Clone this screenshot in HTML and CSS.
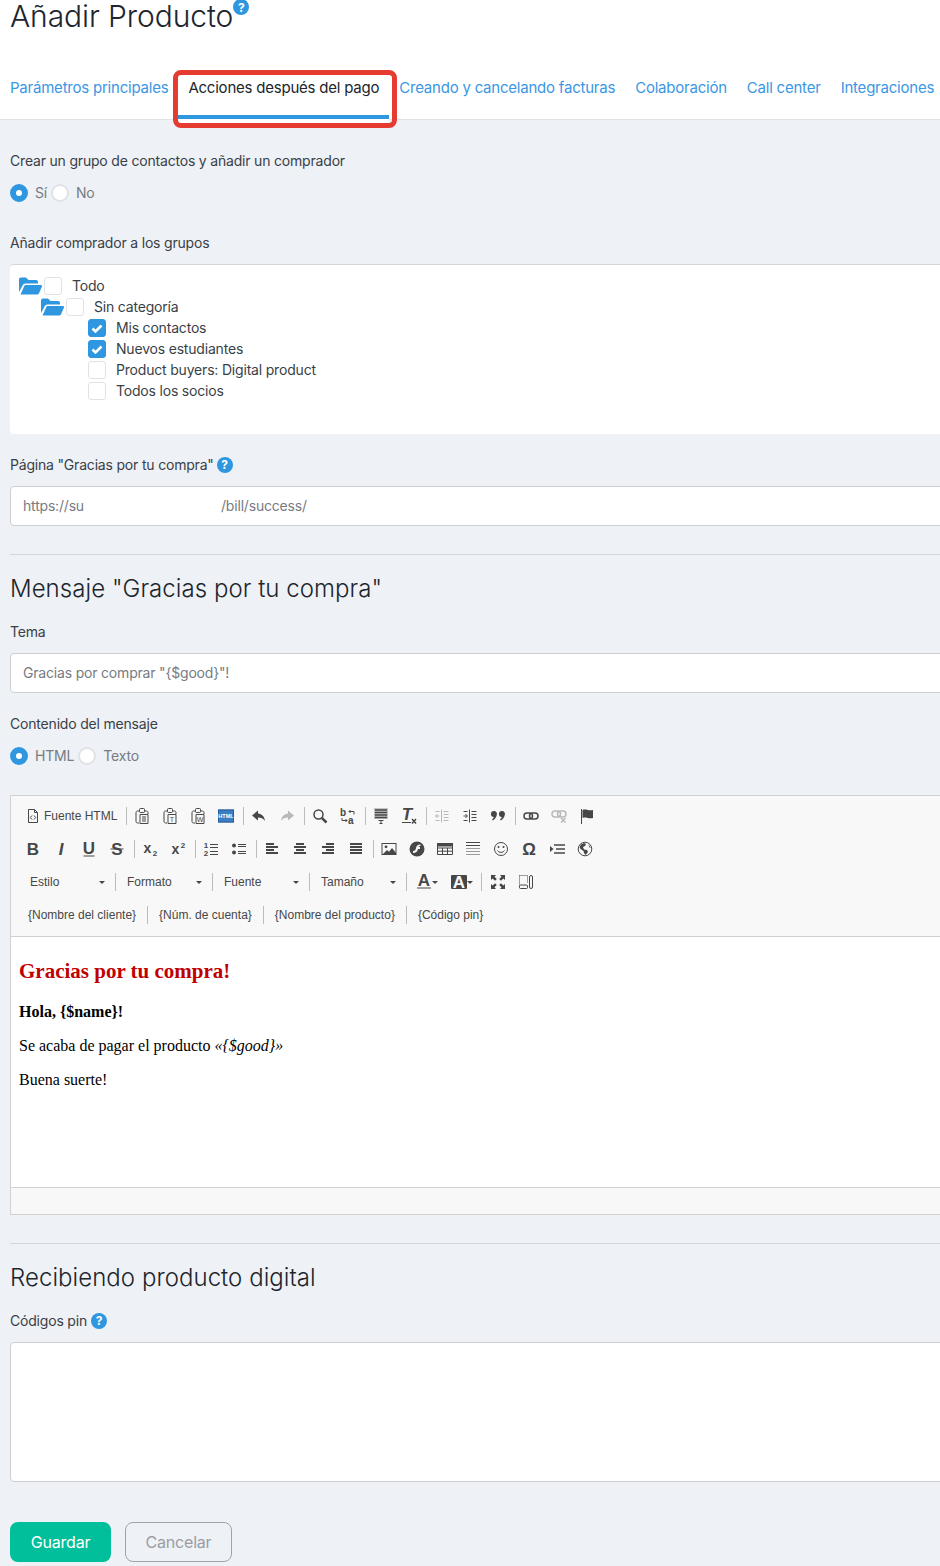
FILE: index.html
```html
<!DOCTYPE html>
<html lang="es">
<head>
    <meta charset="UTF-8"/>
    <meta name="viewport" content="width=device-width, initial-scale=1.0"/>
    <title>Añadir Producto</title>
    <link rel="stylesheet" href="styles.css">
</head>
<body>
<div class="page">
    <header class="top">
        <div class="title-row">
            <h1>Añadir Producto</h1>
            <span class="help help-title">?</span>
        </div>
        <nav class="tabs">
            <a class="tab">Parámetros principales</a>
            <a class="tab active">Acciones después del pago</a>
            <a class="tab">Creando y cancelando facturas</a>
            <a class="tab">Colaboración</a>
            <a class="tab">Call center</a>
            <a class="tab">Integraciones</a>
        </nav>
    </header>

    <main class="content">
        <label class="field-label first">Crear un grupo de contactos y añadir un comprador</label>
        <div class="radios">
            <span class="radio on"></span><span class="radio-text">Sí</span>
            <span class="radio"></span><span class="radio-text">No</span>
        </div>

        <label class="field-label groups">Añadir comprador a los grupos</label>
        <div class="tree">
            <div class="tree-row">
                <svg class="folder" viewBox="0 0 23 18"><path d="M0 15V2.500C0 1.400 0.900 0.500 2 0.500h5l2.500 2.500H17c1.100 0 2 0.900 2 2v1.500H6.500C5.200 6.500 4.200 7.200 3.700 8.300z"/><path d="M1.500 17.500l3.700-8.200c0.300-0.700 1-1.200 1.800-1.200h15c0.800 0 1.300 0.800 1 1.500l-3 6.700c-0.400 0.800-1.200 1.200-2 1.200z"/></svg>
                <span class="check"></span>
                <span class="tree-text">Todo</span>
            </div>
            <div class="tree-row lvl1">
                <svg class="folder" viewBox="0 0 23 18"><path d="M0 15V2.500C0 1.400 0.900 0.500 2 0.500h5l2.500 2.500H17c1.100 0 2 0.900 2 2v1.500H6.500C5.200 6.500 4.200 7.200 3.700 8.300z"/><path d="M1.500 17.500l3.700-8.200c0.300-0.700 1-1.200 1.800-1.200h15c0.800 0 1.300 0.800 1 1.500l-3 6.700c-0.400 0.800-1.200 1.200-2 1.200z"/></svg>
                <span class="check"></span>
                <span class="tree-text">Sin categoría</span>
            </div>
            <div class="tree-row lvl2">
                <span class="check on"><svg viewBox="0 0 16 16"><path d="M3.500 8.500l3 3 6-6"/></svg></span>
                <span class="tree-text">Mis contactos</span>
            </div>
            <div class="tree-row lvl2">
                <span class="check on"><svg viewBox="0 0 16 16"><path d="M3.500 8.500l3 3 6-6"/></svg></span>
                <span class="tree-text">Nuevos estudiantes</span>
            </div>
            <div class="tree-row lvl2">
                <span class="check"></span>
                <span class="tree-text">Product buyers: Digital product</span>
            </div>
            <div class="tree-row lvl2">
                <span class="check"></span>
                <span class="tree-text">Todos los socios</span>
            </div>
        </div>

        <label class="field-label with-help thanks">Página "Gracias por tu compra" <span class="help">?</span></label>
        <div class="input url-input">
            <span class="url-start">https://su</span><span class="url-end">/bill/success/</span>
        </div>

        <hr class="rule">
        <h2>Mensaje "Gracias por tu compra"</h2>

        <label class="field-label tema">Tema</label>
        <input class="input" type="text" value="Gracias por comprar &quot;{$good}&quot;!">

        <label class="field-label body-label">Contenido del mensaje</label>
        <div class="radios">
            <span class="radio on"></span><span class="radio-text">HTML</span>
            <span class="radio"></span><span class="radio-text">Texto</span>
        </div>

        <div class="editor">
            <div class="toolbar">
                <div class="tool-row">
                    <span class="btn btn-source">
                        <svg viewBox="0 0 16 16"><path class="ln" d="M3.500 1.500h6l3 3v10h-9zM9.500 1.500v3h3"/><path class="ln" d="M7 7.500L5.300 9.500 7 11.500M9 7.500l1.700 2L9 11.500"/></svg>
                        Fuente HTML
                    </span>
                    <i class="sep"></i>
                    <span class="btn"><svg viewBox="0 0 16 16"><path class="ln" d="M5 3H3.500C2.700 3 2 3.700 2 4.500v9c0 0.800 0.700 1.500 1.500 1.500H5M11 3h1.500c0.800 0 1.500 0.700 1.500 1.500V6"/><rect class="ln" x="5.500" y="0.500" width="5" height="4" rx="1"/><path class="ln" d="M6 6.500h8v9H6zM8 9h4M8 11h4M8 13h4"/></svg></span>
                    <span class="btn"><svg viewBox="0 0 16 16"><path class="ln" d="M5 3H3.500C2.700 3 2 3.700 2 4.500v9c0 0.800 0.700 1.500 1.500 1.500H5M11 3h1.500c0.800 0 1.500 0.700 1.500 1.500V6"/><rect class="ln" x="5.500" y="0.500" width="5" height="4" rx="1"/><path class="ln" d="M6 6.500h8v9H6z"/><text class="ic-mini" x="10" y="13.500">T</text></svg></span>
                    <span class="btn"><svg viewBox="0 0 16 16"><path class="ln" d="M5 3H3.500C2.700 3 2 3.700 2 4.500v9c0 0.800 0.700 1.500 1.500 1.500H5M11 3h1.500c0.800 0 1.500 0.700 1.500 1.500V6"/><rect class="ln" x="5.500" y="0.500" width="5" height="4" rx="1"/><path class="ln" d="M6 6.500h8v9H6z"/><text class="ic-mini" x="10" y="13.500">W</text></svg></span>
                    <span class="btn"><svg viewBox="0 0 16 16"><rect x="0" y="1.500" width="16" height="13" fill="#3a7fc4"/><rect x="0.500" y="2" width="15" height="12" fill="none" stroke="#2a5f99"/><text class="ic-html" x="8" y="10.200">HTML</text></svg></span>
                    <i class="sep"></i>
                    <span class="btn"><svg viewBox="0 0 16 16"><path d="M7 2.500L1 7.500l6 5V9.500c3 0 5 0.800 7 3.500-0.500-4.500-3-7-7-7.500z"/></svg></span>
                    <span class="btn off"><svg viewBox="0 0 16 16"><path d="M9 2.500l6 5-6 5V9.500c-3 0-5 0.800-7 3.500 0.500-4.500 3-7 7-7.500z"/></svg></span>
                    <i class="sep"></i>
                    <span class="btn"><svg viewBox="0 0 16 16"><circle class="ln ln2" cx="6.500" cy="6.500" r="4.500"/><path class="ln ln3" d="M9.800 9.800l4.700 4.700"/></svg></span>
                    <span class="btn"><svg viewBox="0 0 16 16"><text class="ic-mini ic-side" x="0" y="8">b</text><text class="ic-mini ic-side" x="8" y="15.500">a</text><path class="ln" d="M9 3.500h5v3M10.500 2L9 3.500 10.500 5M2 10v2.500h5M5.500 11L7 12.500 5.500 14"/></svg></span>
                    <i class="sep"></i>
                    <span class="btn"><svg viewBox="0 0 16 16"><rect x="1" y="0" width="14" height="11" fill="#c4c4c4"/><path class="ln ln2" d="M2 2h12M2 4.500h12M2 7h12M2 9.500h12"/><path class="ln" d="M5.500 12.500h5M8 12.500v3M6.500 15.500h3"/></svg></span>
                    <span class="btn"><svg viewBox="0 0 16 16"><text class="ic-letter ic-italic" x="6" y="12">T</text><path class="ln" d="M1 14.500h9"/><path class="ln ln2" d="M11 11l4 4.500M15 11l-4 4.500"/></svg></span>
                    <i class="sep"></i>
                    <span class="btn off"><svg viewBox="0 0 16 16"><path class="ln" d="M7.500 1.500v13M9.500 3.500h5M9.500 6.500h5M9.500 9.500h5M9.500 12.500h5M1.500 3.500h4M1.500 12.500h4M5.500 8H2M3.500 6L1.500 8l2 2"/></svg></span>
                    <span class="btn"><svg viewBox="0 0 16 16"><path class="ln" d="M7.500 1.500v13M9.500 3.500h5M9.500 6.500h5M9.500 9.500h5M9.500 12.500h5M1.500 3.500h4M1.500 12.500h4M1.500 8H5M3.500 6l2 2-2 2"/></svg></span>
                    <span class="btn"><svg viewBox="0 0 16 16"><path d="M4 3a3 3 0 0 1 2.800 4c-0.600 2.500-2 4.300-4 5.500l-0.800-1c1-0.800 1.700-1.700 1.900-2.500A3 3 0 0 1 4 3zM12 3a3 3 0 0 1 2.800 4c-0.600 2.500-2 4.300-4 5.500l-0.800-1c1-0.800 1.700-1.700 1.900-2.500A3 3 0 0 1 12 3z"/></svg></span>
                    <i class="sep"></i>
                    <span class="btn"><svg viewBox="0 0 16 16"><rect class="ln ln2" x="1" y="5" width="8.500" height="6" rx="3"/><rect class="ln ln2" x="6.500" y="5" width="8.500" height="6" rx="3"/></svg></span>
                    <span class="btn off"><svg viewBox="0 0 16 16"><rect class="ln ln2" x="1" y="3" width="8.500" height="6" rx="3"/><rect class="ln ln2" x="6.500" y="3" width="8.500" height="6" rx="3"/><path class="ln ln2" d="M10 10l4.500 4.500M14.500 10L10 14.500"/></svg></span>
                    <span class="btn"><svg viewBox="0 0 16 16"><path class="ln" d="M2.500 1v15"/><path d="M3.500 2c4-1.500 6 1.200 10.500 0v8c-4.500 1.200-6.500-1.500-10.500 0z"/></svg></span>
                </div>

                <div class="tool-row">
                    <span class="btn"><svg viewBox="0 0 16 16"><text class="ic-letter" x="8" y="14">B</text></svg></span>
                    <span class="btn"><svg viewBox="0 0 16 16"><text class="ic-letter ic-italic" x="8" y="14">I</text></svg></span>
                    <span class="btn"><svg viewBox="0 0 16 16"><text class="ic-letter" x="8" y="12.500">U</text><path class="ln" d="M2.500 15h11"/></svg></span>
                    <span class="btn"><svg viewBox="0 0 16 16"><text class="ic-letter" x="8" y="14">S</text><path class="ln" d="M1.500 8h13"/></svg></span>
                    <i class="sep"></i>
                    <span class="btn"><svg viewBox="0 0 16 16"><text class="ic-letter ic-small" x="5.500" y="11.500">x</text><text class="ic-sub" x="13" y="15">2</text></svg></span>
                    <span class="btn"><svg viewBox="0 0 16 16"><text class="ic-letter ic-small" x="5.500" y="13">x</text><text class="ic-sub" x="13" y="7">2</text></svg></span>
                    <i class="sep"></i>
                    <span class="btn"><svg viewBox="0 0 16 16"><text class="ic-sub" x="3" y="7">1</text><text class="ic-sub" x="3" y="14.500">2</text><path class="ln" d="M7 3.500h8M7 6.500h8M7 10.500h8M7 13.500h8"/></svg></span>
                    <span class="btn"><svg viewBox="0 0 16 16"><circle cx="3" cy="4.500" r="2"/><circle cx="3" cy="11.500" r="2"/><path class="ln" d="M7 3.500h8M7 5.500h8M7 10.500h8M7 12.500h8"/></svg></span>
                    <i class="sep"></i>
                    <span class="btn"><svg viewBox="0 0 16 16"><path class="ln ln-bar" d="M2 3h8M2 6h12M2 9h8M2 12h12"/></svg></span>
                    <span class="btn"><svg viewBox="0 0 16 16"><path class="ln ln-bar" d="M4 3h8M2 6h12M4 9h8M2 12h12"/></svg></span>
                    <span class="btn"><svg viewBox="0 0 16 16"><path class="ln ln-bar" d="M6 3h8M2 6h12M6 9h8M2 12h12"/></svg></span>
                    <span class="btn"><svg viewBox="0 0 16 16"><path class="ln ln-bar" d="M2 3h12M2 6h12M2 9h12M2 12h12"/></svg></span>
                    <i class="sep"></i>
                    <span class="btn"><svg viewBox="0 0 16 16"><rect class="ln" x="1" y="2.500" width="14" height="11"/><circle cx="5" cy="5.800" r="1.400"/><path d="M2 13l4-4 2 1.800L11 7l4 5v1.500z"/></svg></span>
                    <span class="btn"><svg viewBox="0 0 16 16"><circle cx="8" cy="8" r="7.500"/><path fill="#f8f8f8" d="M11.500 3.500c-3 0-4 1.500-4.500 3.500-0.400 1.800-1 3-3 3v2c3 0 4.300-1.600 5-4h2V6H9.600c0.300-0.700 0.900-1 1.900-1z"/></svg></span>
                    <span class="btn"><svg viewBox="0 0 16 16"><path class="ln" d="M0.500 2.500h15v11H0.500zM0.500 7h15M0.500 10.200h15M5.500 7v6.500M10.500 7v6.500"/><rect x="0" y="2" width="16" height="3.500"/></svg></span>
                    <span class="btn"><svg viewBox="0 0 16 16"><path class="ln" d="M1 1.500h14M1 4.500h14"/><path class="ln-grey" d="M1 7.500h14M1 10.500h14M1 13.500h14"/></svg></span>
                    <span class="btn"><svg viewBox="0 0 16 16"><circle class="ln" cx="8" cy="8" r="6.500"/><circle cx="5.500" cy="6" r="1"/><circle cx="10.500" cy="6" r="1"/><path class="ln" d="M4.500 9.500c1.500 2.500 5.500 2.500 7 0"/></svg></span>
                    <span class="btn"><svg viewBox="0 0 16 16"><text class="ic-letter ic-omega" x="8" y="14">Ω</text></svg></span>
                    <span class="btn"><svg viewBox="0 0 16 16"><path d="M1 5l3.500 3L1 11z"/><path class="ln ln2" d="M5 4h11M7 8h9M5 12h11"/></svg></span>
                    <span class="btn"><svg viewBox="0 0 16 16"><circle class="ln" cx="8" cy="8" r="6.800"/><path d="M4 3.500l3-1.500 2 1-1 2-2 1 1 2.500 3 0.500 1 2-2.500 3-1.500-2-0.500-2-3-2-1-2zM11.500 3.500l2.500 3-1.500 0z"/></svg></span>
                </div>

                <div class="tool-row tool-row-c">
                    <span class="combo">Estilo<b class="caret"></b></span>
                    <i class="sep"></i>
                    <span class="combo">Formato<b class="caret"></b></span>
                    <i class="sep"></i>
                    <span class="combo">Fuente<b class="caret"></b></span>
                    <i class="sep"></i>
                    <span class="combo">Tamaño<b class="caret"></b></span>
                    <i class="sep"></i>
                    <span class="color-btn color-first">
                        <svg viewBox="0 0 16 16"><text class="ic-letter" x="8" y="11.500">A</text><rect x="1" y="13" width="14" height="2" fill="#a0a0a0"/></svg>
                        <b class="caret"></b>
                    </span>
                    <span class="color-btn">
                        <svg viewBox="0 0 16 16"><rect x="0" y="1" width="16" height="14" rx="1"/><text class="ic-letter ic-inv" x="8" y="13.500">A</text></svg>
                        <b class="caret"></b>
                    </span>
                    <i class="sep"></i>
                    <span class="btn"><svg viewBox="0 0 16 16"><path d="M1 1h5L4.500 2.700 6.800 5 5 6.800 2.700 4.500 1 6zM15 1v5l-1.700-1.500L11 6.800 9.200 5l2.300-2.300L10 1zM1 15v-5l1.700 1.500L5 9.200 6.800 11l-2.300 2.300L6 15zM15 15h-5l1.500-1.700L9.200 11l1.800-1.800 2.300 2.300L15 10z"/></svg></span>
                    <span class="btn"><svg viewBox="0 0 16 16"><path class="ln ln-dot" d="M1.500 1.500h8v8M1.500 1.500v9"/><rect class="ln" x="1.500" y="11" width="8" height="3.500" rx="1"/><rect class="ln" x="11.500" y="1.500" width="3" height="13" rx="1.500"/></svg></span>
                </div>

                <div class="tool-row tool-row-d">
                    <span class="tpl">{Nombre del cliente}</span>
                    <i class="sep"></i>
                    <span class="tpl">{Núm. de cuenta}</span>
                    <i class="sep"></i>
                    <span class="tpl">{Nombre del producto}</span>
                    <i class="sep"></i>
                    <span class="tpl">{Código pin}</span>
                </div>
            </div>

            <div class="editor-body">
                <h3>Gracias por tu compra!</h3>
                <p><strong>Hola, {$name}!</strong></p>
                <p>Se acaba de pagar el producto <em>«{$good}»</em></p>
                <p>Buena suerte!</p>
            </div>
            <div class="editor-foot"></div>
        </div>

        <hr class="rule">
        <h2>Recibiendo producto digital</h2>

        <label class="field-label with-help pins">Códigos pin <span class="help">?</span></label>
        <textarea class="pin-area"></textarea>

        <div class="actions">
            <button class="btn-save" type="button">Guardar</button>
            <button class="btn-cancel" type="button">Cancelar</button>
        </div>
    </main>
</div>
</body>
</html>
```

FILE: styles.css
```css
html, body {
    margin: 0;
    overflow-x: hidden;
}

body {
    font-family: Inter, "Liberation Sans", sans-serif;
    background: #eef1f6;
    color: #3a3f47;
    font-size: 14px;
    letter-spacing: -0.19px;
}

.page {
    width: 940px;
    height: 1566px;
    overflow: hidden;
}

/* header */
.top {
    background: #fff;
    height: 119px;
    border-bottom: 1px solid #dfe2e7;
}

.title-row {
    display: flex;
    align-items: flex-start;
    height: 70px;
    padding-left: 10px;
}

h1 {
    margin: 0;
    font-size: 30px;
    font-weight: 300;
    line-height: 32px;
    letter-spacing: -0.08px;
    color: #20252c;
}

.help {
    display: inline-flex;
    align-items: center;
    justify-content: center;
    width: 16px;
    height: 16px;
    border-radius: 50%;
    background: #2f96e0;
    color: #fff;
    font-size: 12px;
    font-weight: 700;
    letter-spacing: 0;
}

.help-title {
    margin-top: -1px;
}

.tabs {
    display: flex;
    height: 49px;
}

.tab {
    padding: 8px 10px 0;
    font-size: 15px;
    line-height: 20px;
    letter-spacing: -0.22px;
    color: #3b97e3;
    white-space: nowrap;
    box-sizing: border-box;
}

.tab.active {
    position: relative;
    color: #20252c;
    border-bottom: 4px solid #2f96e0;
    box-shadow: 0 4px 0 #fff;
    background: #fff;
}

/* the red annotation round the active tab */
.tab.active::after {
    content: "";
    position: absolute;
    left: -5px;
    right: -8px;
    top: 0;
    bottom: -13px;
    border: 5px solid #e53b30;
    border-radius: 8px;
}

/* form */
.content {
    width: 1000px;
    padding: 0 10px;
    box-sizing: border-box;
}

.field-label {
    display: block;
    line-height: 20px;
}

.with-help {
    display: flex;
    align-items: center;
    gap: 4px;
}

.first { padding-top: 31px; }
.groups { margin-top: 31px; }
.thanks { margin-top: 21px; margin-bottom: 11px; height: 20px; gap: 3px; }
.tema { margin-top: 16px; margin-bottom: 11px; }
.body-label { margin-top: 21px; }
.pins { margin-top: 16px; margin-bottom: 11px; }

.radios {
    display: flex;
    align-items: center;
    height: 18px;
    margin-top: 13px;
}

.radio {
    width: 18px;
    height: 18px;
    box-sizing: border-box;
    border-radius: 50%;
    background: #fff;
    border: 2px solid #dfe3e8;
    margin-right: 7px;
}

.radio.on {
    border: 6px solid #2f96e0;
}

.radio-text {
    color: #777b82;
    margin: -2px 4px 0 0;
}

.tree {
    margin-top: 11px;
    height: 170px;
    box-sizing: border-box;
    padding: 10px 9px 0;
    background: #fff;
    border-top: 1px solid #d3d6db;
    border-radius: 4px 0 0 4px;
}

.tree-row {
    display: flex;
    align-items: center;
    height: 21px;
}

.lvl1 { padding-left: 22px; }
.lvl2 { padding-left: 69px; }

.folder {
    width: 23px;
    height: 18px;
    fill: #2f96e0;
    margin-right: 2px;
}

.check {
    width: 18px;
    height: 18px;
    box-sizing: border-box;
    border: 1px solid #dfe3e8;
    border-radius: 3px;
    background: #fff;
    margin-right: 10px;
}

.check.on {
    background: #2f96e0;
    border-color: #2f96e0;
}

.check svg {
    display: block;
    width: 16px;
    height: 16px;
    fill: none;
    stroke: #fff;
    stroke-width: 2.600;
}

.input {
    display: block;
    width: 100%;
    height: 40px;
    box-sizing: border-box;
    padding: 0 12px 2px;
    border: 1px solid #ccced3;
    border-radius: 4px;
    background: #fff;
    font: inherit;
    letter-spacing: -0.19px;
    color: #777b82;
    outline: none;
}

.url-input {
    display: flex;
    padding-bottom: 0;
    line-height: 38px;
}

.url-start {
    width: 59px;
    white-space: nowrap;
    margin-right: 139px;
}

.url-end {
    white-space: nowrap;
}

.rule {
    border: 0;
    border-top: 1px solid #d3d6db;
    margin: 28px 0 0;
}

h2 {
    margin: 17px 0 0;
    font-size: 24px;
    font-weight: 300;
    line-height: 34px;
    letter-spacing: 0.05px;
    color: #20252c;
}

/* editor */
.editor {
    margin-top: 30px;
    height: 420px;
    box-sizing: border-box;
    border: 1px solid #d1d1d1;
    background: #f8f8f8;
    display: flex;
    flex-direction: column;
    font-family: "Liberation Sans", Arial, sans-serif;
    color: #474747;
    letter-spacing: 0;
}

.toolbar {
    height: 141px;
    flex: none;
    box-sizing: border-box;
    padding: 10px 0 0 8px;
    border-bottom: 1px solid #d1d1d1;
}

.tool-row {
    display: flex;
    align-items: center;
    height: 20px;
    margin-bottom: 13px;
}

.btn {
    display: flex;
    align-items: center;
    justify-content: center;
    width: 28px;
    height: 20px;
    flex: none;
}

.btn svg, .color-btn svg {
    width: 16px;
    height: 16px;
    fill: #474747;
    flex: none;
    overflow: visible;
}

.btn.off svg {
    opacity: 0.35;
}

.btn-source {
    width: auto;
    padding: 0 6px 0 6px;
    gap: 3px;
    font-size: 12px;
    white-space: nowrap;
}

.sep {
    flex: none;
    width: 1px;
    height: 18px;
    background: #bcbcbc;
    margin: 0 1px 0 3px;
}

.ln {
    fill: none;
    stroke: #474747;
    stroke-width: 1;
}

.ln2 { stroke-width: 1.500; }
.ln3 { stroke-width: 2.500; }
.ln-bar { stroke-width: 2; }

.ln-grey {
    fill: none;
    stroke: #9a9a9a;
}

.ln-dot {
    stroke-dasharray: 1 1;
}

.ic-letter {
    font-family: "Liberation Sans", Arial, sans-serif;
    font-size: 17px;
    font-weight: 700;
    text-anchor: middle;
}

.ic-italic {
    font-style: italic;
}

.ic-small {
    font-size: 14px;
}

.ic-omega {
    font-size: 17px;
}

.ic-inv {
    fill: #f8f8f8;
}

.ic-sub {
    font-family: "Liberation Sans", Arial, sans-serif;
    font-size: 8px;
    font-weight: 700;
    text-anchor: middle;
}

.ic-mini {
    font-family: "Liberation Sans", Arial, sans-serif;
    font-size: 7px;
    text-anchor: middle;
}

.ic-side {
    font-size: 10px;
    font-weight: 700;
    text-anchor: start;
}

.ic-html {
    font-family: "Liberation Sans", Arial, sans-serif;
    font-size: 5.500px;
    font-weight: 700;
    fill: #fff;
    text-anchor: middle;
}

.tool-row-c {
    padding-left: 11px;
}

.combo {
    display: flex;
    align-items: center;
    justify-content: space-between;
    width: 85px;
    font-size: 12px;
    padding-right: 10px;
    box-sizing: border-box;
    flex: none;
}

.tool-row-c .sep {
    margin: 0 11px 0 0;
}

.tool-row-c .color-btn + .sep {
    margin: 0 2px 0 -5px;
}

.caret {
    width: 0;
    height: 0;
    border: 3px solid transparent;
    border-top: 3px solid #474747;
    border-bottom: 0;
    flex: none;
}

.color-btn {
    display: flex;
    align-items: center;
    width: 22px;
    height: 20px;
    margin-right: 13px;
    flex: none;
}

.color-first {
    margin-left: -2px;
}

.tool-row-d {
    padding-left: 9px;
    font-size: 12px;
}

.tool-row-d .sep {
    margin: 0 11px;
}

.editor-body {
    flex: 1;
    background: #fff;
    padding: 0 8px;
    font-family: "Liberation Serif", "Times New Roman", serif;
    font-size: 16px;
    color: #000;
    overflow: hidden;
}

.editor-body h3 {
    margin: 22px 0 0;
    font-size: 21px;
    line-height: 24px;
    color: #c00000;
}

.editor-body h3 + p {
    margin-top: 20px;
}

.editor-body p {
    margin: 16px 0;
    line-height: 18px;
}

.editor-foot {
    height: 27px;
    flex: none;
    border-top: 1px solid #d1d1d1;
    box-sizing: border-box;
}

.pin-area {
    display: block;
    width: 100%;
    height: 140px;
    box-sizing: border-box;
    border: 1px solid #ccced3;
    border-radius: 4px;
    background: #fff;
    resize: none;
    outline: none;
}

.actions {
    display: flex;
    gap: 14px;
    margin-top: 40px;
}

.btn-save, .btn-cancel {
    height: 40px;
    font-family: inherit;
    font-size: 16px;
    letter-spacing: -0.2px;
    border-radius: 8px;
    box-sizing: border-box;
}

.btn-save {
    width: 101px;
    border: none;
    background: #00bf9a;
    color: #fff;
}

.btn-cancel {
    width: 107px;
    border: 1px solid #a0a3a8;
    background: transparent;
    color: #9a9da3;
}
```
